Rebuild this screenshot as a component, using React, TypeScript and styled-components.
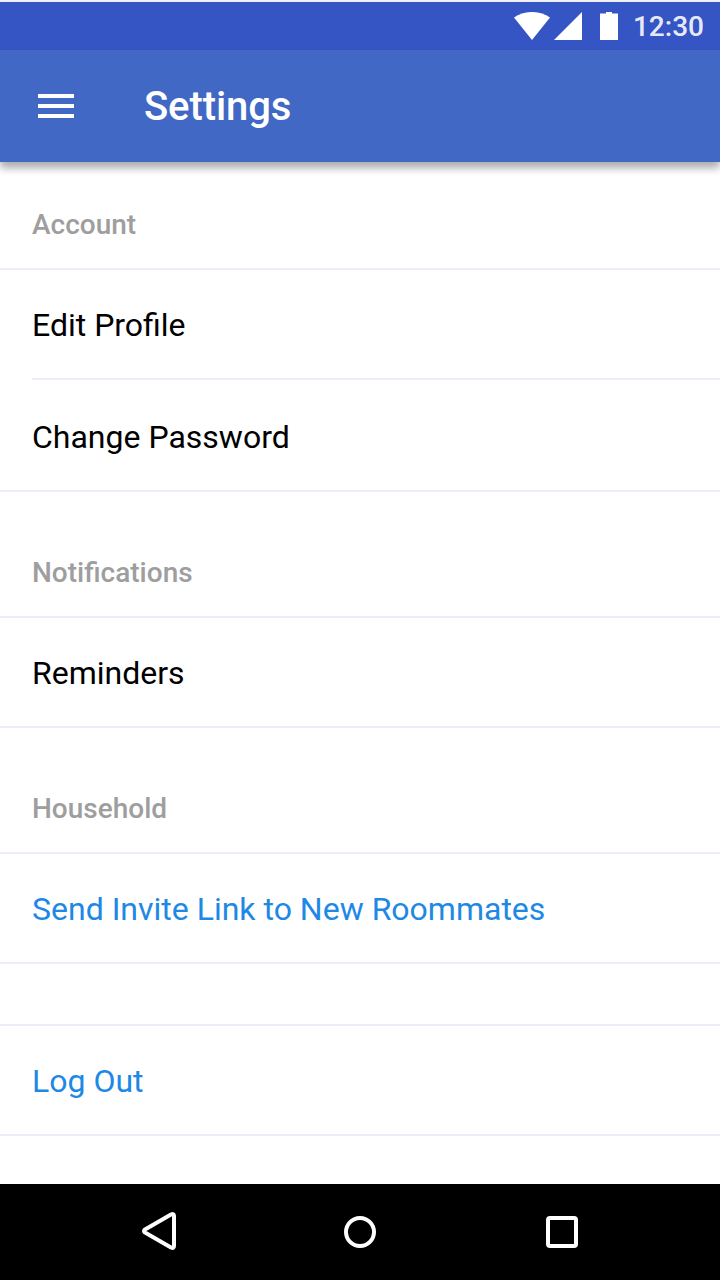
import React from 'react';
import styled, { createGlobalStyle } from 'styled-components';

const GlobalStyle = createGlobalStyle`
  * { box-sizing: border-box; }
  body { margin: 0; background: #fff; font-family: Roboto, sans-serif; }
  h1, h2, p { margin: 0; }
`;

const Screen = styled.div`
  display: flex;
  flex-direction: column;
  width: 720px;
  height: 1280px;
  overflow: hidden;
  background: #fff;
`;

const StatusBar = styled.div`
  display: flex;
  align-items: center;
  justify-content: flex-end;
  flex: none;
  height: 50px;
  padding-right: 16px;
  border-top: 2px solid #f0f0f5;
  background: #3655c4;
`;

const StatusIcons = styled.svg`
  display: block;
  flex: none;
  width: 104px;
  height: 28px;
  fill: #fff;
`;

const Clock = styled.span`
  width: 86px;
  padding-top: 2px;
  font-size: 28px;
  font-weight: 500;
  line-height: 46px;
  text-align: right;
  color: rgba(255, 255, 255, 0.9);
`;

const AppBar = styled.header`
  display: flex;
  align-items: center;
  flex: none;
  height: 112px;
  padding-left: 38px;
  background: #4168c5;
  box-shadow: 0 6px 8px rgba(0, 0, 0, 0.33);
`;

const MenuIcon = styled.svg`
  display: block;
  width: 36px;
  height: 24px;
  fill: #fff;
`;

const Title = styled.h1`
  margin-left: 70px;
  padding-top: 2px;
  font-size: 40px;
  font-weight: 500;
  line-height: 48px;
  letter-spacing: -0.1px;
  color: #fff;
`;

const Content = styled.main`
  flex: 1;
`;

const SectionHeader = styled.h2<{ $first?: boolean }>`
  height: ${(p) => (p.$first ? 108 : 126)}px;
  padding: ${(p) => (p.$first ? 47 : 65)}px 32px 0;
  border-bottom: 2px solid #ebeefa;
  font-size: 28px;
  font-weight: 500;
  line-height: 32px;
  color: #9e9e9e;
`;

const Row = styled.div<{ $inset?: boolean; $tall?: boolean; $link?: boolean }>`
  height: ${(p) => (p.$tall ? 112 : 110)}px;
  margin-left: ${(p) => (p.$inset ? 32 : 0)}px;
  padding: ${(p) => (p.$tall ? 38 : 36)}px 0 0 ${(p) => (p.$inset ? 0 : 32)}px;
  border-bottom: 2px solid #ebeefa;
  font-size: 32px;
  line-height: 38px;
  color: ${(p) => (p.$link ? '#1e88e5' : '#000')};
`;

const Spacer = styled.div`
  height: 62px;
  border-bottom: 2px solid #ebeefa;
`;

const NavBar = styled.nav`
  display: flex;
  align-items: center;
  justify-content: space-between;
  flex: none;
  height: 96px;
  padding: 0 138px;
  background: #000;
`;

const NavIcon = styled.svg`
  display: block;
  width: 40px;
  height: 40px;
  fill: none;
  stroke: #fff;
  stroke-width: 4;
  stroke-linejoin: round;
`;

export default function App() {
  return (
    <Screen>
      <GlobalStyle />
      <StatusBar>
        <StatusIcons viewBox="0 0 104 28">
          <path d="M0 5.6C10.5-1.9 25.5-1.9 36 5.6L18 28Z" />
          <path d="M68 0V28H40Z" />
          <path d="M86 1.4h6V0h6v1.4h6V28H86Z" />
        </StatusIcons>
        <Clock>12:30</Clock>
      </StatusBar>
      <AppBar>
        <MenuIcon viewBox="0 0 36 24">
          <path d="M0 0h36v4H0zM0 10h36v4H0zM0 20h36v4H0z" />
        </MenuIcon>
        <Title>Settings</Title>
      </AppBar>
      <Content>
        <SectionHeader $first>Account</SectionHeader>
        <Row $inset>Edit Profile</Row>
        <Row $tall>Change Password</Row>
        <SectionHeader>Notifications</SectionHeader>
        <Row>Reminders</Row>
        <SectionHeader>Household</SectionHeader>
        <Row $link>Send Invite Link to New Roommates</Row>
        <Spacer />
        <Row $link>Log Out</Row>
      </Content>
      <NavBar>
        <NavIcon viewBox="0 0 40 40">
          <path d="M33 2.5Q36 1.2 36 4V34Q36 36.8 33 35.5L7 20.6Q5 19 7 17.4Z" />
        </NavIcon>
        <NavIcon viewBox="0 0 40 40">
          <circle cx="20" cy="20" r="14" />
        </NavIcon>
        <NavIcon viewBox="0 0 40 40">
          <rect x="6" y="6" width="28" height="28" rx="2" />
        </NavIcon>
      </NavBar>
    </Screen>
  );
}
